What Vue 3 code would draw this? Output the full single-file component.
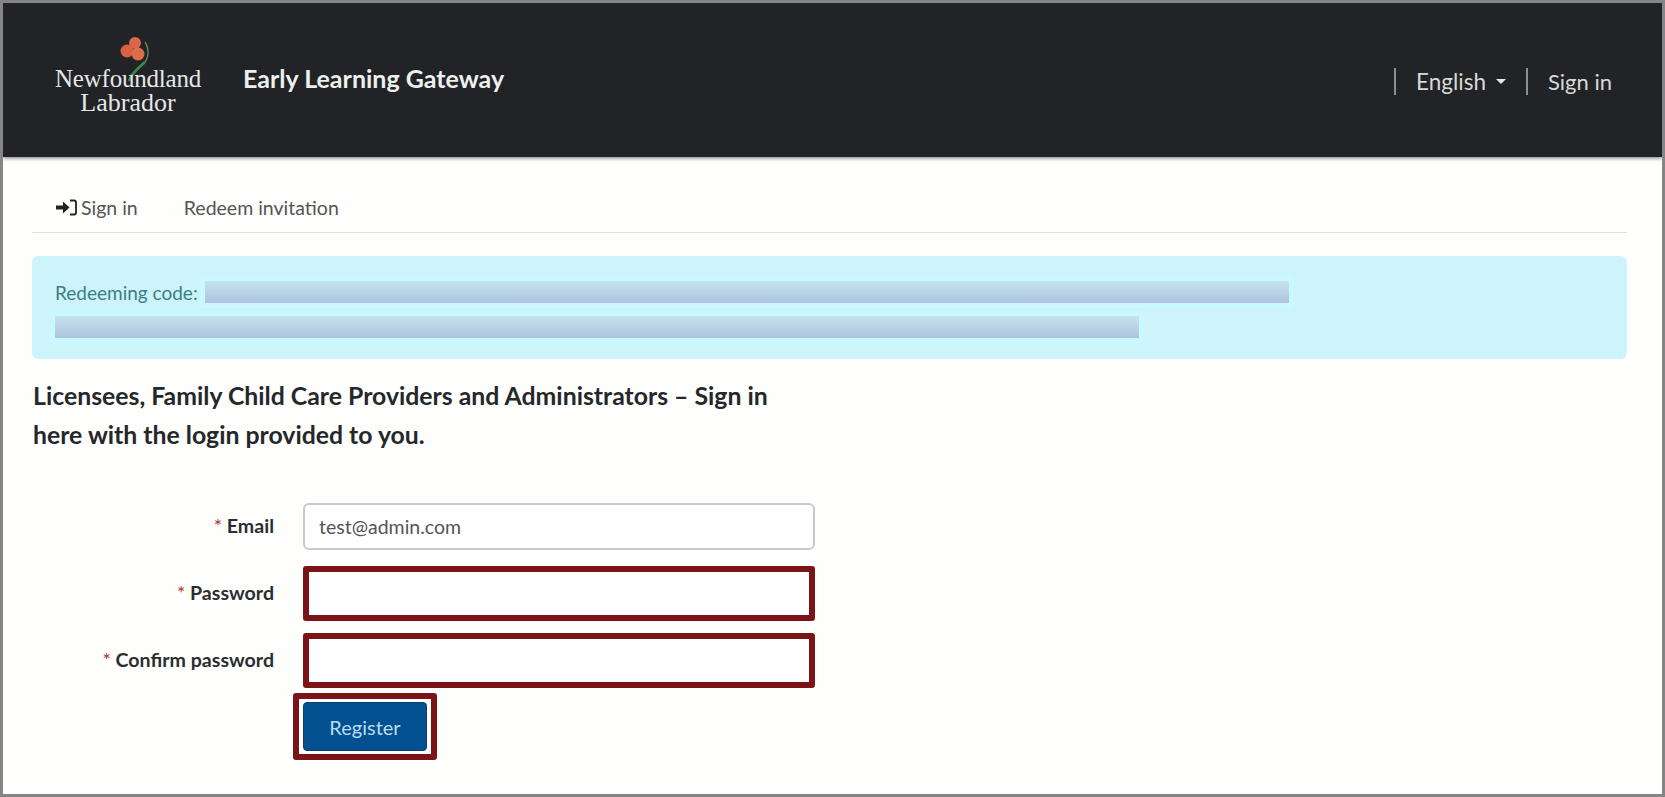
<script setup>
const fields = [
  { label: 'Email', value: 'test@admin.com', marked: false },
  { label: 'Password', value: '', marked: true },
  { label: 'Confirm password', value: '', marked: true }
]
</script>

<template>
  <div class="page">
    <header class="topbar">
      <div class="brand">
        <div class="logo">
          <svg class="flower" width="48" height="56" viewBox="0 0 48 56">
            <path d="M17 47 C20 38 27 34 33 28" fill="none" stroke="#3f8a4a" stroke-width="2.6" />
            <path d="M33 28 C38 21 36 12 33 8" fill="none" stroke="#5d8a55" stroke-width="1.4" />
            <circle cx="23" cy="9" r="6" fill="#d9694a" />
            <circle cx="15" cy="17" r="6.5" fill="#d8613f" />
            <circle cx="26" cy="20" r="6.5" fill="#dd6c48" />
          </svg>
          <span class="logo-a">Newfoundland</span>
          <span class="logo-b">Labrador</span>
        </div>
        <span class="title">Early Learning Gateway</span>
      </div>
      <nav class="topnav">
        <span class="sep"></span>
        <span class="lang">English<i class="caret"></i></span>
        <span class="sep second"></span>
        <span class="signin">Sign in</span>
      </nav>
    </header>

    <main class="content">
      <div class="tabs">
        <span class="tab first">
          <svg width="21" height="17" viewBox="0 0 21 17">
            <path d="M0 6.5h7V2.5l6.5 6-6.5 6v-4H0z" fill="#222" />
            <path d="M14 1.5h4a2 2 0 0 1 2 2v10a2 2 0 0 1-2 2h-4" fill="none" stroke="#222" stroke-width="1.8" />
          </svg>
          Sign in
        </span>
        <span class="tab">Redeem invitation</span>
      </div>

      <div class="alert">
        <div class="alert-line">
          <span class="alert-label">Redeeming code:</span>
          <span class="redact r1"></span>
        </div>
        <div class="alert-line second-line">
          <span class="redact r2"></span>
        </div>
      </div>

      <h2 class="intro">Licensees, Family Child Care Providers and Administrators – Sign in here with the login provided to you.</h2>

      <form class="form" @submit.prevent>
        <template v-for="f in fields" :key="f.label">
          <label class="label" :class="{ spaced: !f.marked }"><span class="star">*</span> {{ f.label }}</label>
          <input class="input" :class="{ marked: f.marked, spaced: !f.marked }" :value="f.value" type="text" />
        </template>
        <span></span>
        <div class="btn-mark">
          <button class="btn" type="submit">Register</button>
        </div>
      </form>
    </main>
  </div>
</template>

<style>
html, body { margin: 0; background: #fff; }
</style>

<style scoped>
.page {
  box-sizing: border-box;
  width: 1665px;
  height: 797px;
  border: 3px solid #858585;
  overflow: hidden;
  background: #fefefd;
  font-family: Lato, "Open Sans", sans-serif;
  color: #212529;
}
.topbar {
  height: 154px;
  background: #212327;
  box-shadow: 0 1px 4px rgba(0, 0, 0, 0.55);
  display: flex;
  align-items: center;
  justify-content: space-between;
  position: relative;
}
.brand { display: flex; align-items: center; margin-top: -2px; }
.logo {
  position: relative;
  width: 150px;
  margin-left: 50px;
  padding-top: 24px;
  display: flex;
  flex-direction: column;
  align-items: center;
  color: #e6e6e6;
  font-family: "Liberation Serif", serif;
  font-size: 25px;
  line-height: 24px;
}
.flower { position: absolute; left: 59px; top: -9px; }
.logo-a, .logo-b { position: relative; white-space: nowrap; }
.logo-a { letter-spacing: -0.2px; }
.logo-b { font-size: 26px; }
.title {
  margin-left: 40px;
  margin-top: -3px;
  color: #eef0ee;
  font-size: 25px;
  font-weight: 700;
}
.topnav {
  display: flex;
  align-items: center;
  padding: 2px 50px 0 0;
  color: #d8dad6;
  font-size: 22.5px;
}
.sep { width: 2px; height: 27px; background: #8d8e90; }
.lang { margin-left: 20px; display: flex; align-items: center; }
.caret {
  margin-left: 10px;
  border-left: 5px solid transparent;
  border-right: 5px solid transparent;
  border-top: 5px solid #e8e8e8;
}
.second { margin-left: 20px; }
.signin { margin-left: 20px; font-size: 22px; }

.content { padding: 0 35px 0 29px; }
.tabs {
  height: 76px;
  border-bottom: 1px solid #dfe1e0;
  display: flex;
  align-items: center;
  padding-top: 26px;
  box-sizing: border-box;
  font-size: 19.5px;
  color: #555;
}
.tab { display: flex; align-items: center; gap: 4px; margin-left: 46px; }
.tab.first { margin-left: 24px; }
.alert {
  margin-top: 23px;
  height: 103px;
  box-sizing: border-box;
  padding-top: 25px;
  padding-left: 23px;
  background: #cdf4fb;
  border-radius: 6px;
  color: #3c7f82;
  font-size: 19px;
}
.alert-line { display: flex; align-items: center; height: 22px; }
.second-line { margin-top: 13px; }
.alert-label { width: 150px; white-space: nowrap; }
.redact {
  display: block;
  height: 22px;
  background: linear-gradient(#c4e4ee, #aec2e0);
  box-shadow: 0 0 0 5px #c9f9ff;
}
.r1 { width: 1084px; }
.r2 { width: 1084px; }
.intro {
  width: 750px;
  margin: 18px 0 0 1px;
  font-size: 24.8px;
  line-height: 38.5px;
  font-weight: 700;
  color: #25282b;
}
.form {
  margin-top: 49px;
  display: grid;
  grid-template-columns: 242px 512px;
  column-gap: 29px;
  row-gap: 12px;
  align-items: center;
}
.spaced { margin-bottom: 4px; }
.label {
  text-align: right;
  font-size: 19.6px;
  font-weight: 700;
  color: #2b2e30;
  margin-top: -2px;
}
.star { color: #a33; font-weight: 400; }
.input {
  box-sizing: border-box;
  width: 512px;
  height: 47px;
  padding: 0 14px;
  border: 2px solid #c9c9c9;
  border-radius: 6px;
  background: #fff;
  font-family: Lato, sans-serif;
  font-size: 19.5px;
  color: #555;
  outline: none;
}
.input.marked {
  height: 55px;
  border: 6px solid #7a1416;
  border-radius: 3px;
}
.btn-mark {
  box-sizing: border-box;
  width: 144px;
  height: 67px;
  margin-left: -10px;
  margin-top: -7px;
  border: 6px solid #7a1416;
  border-radius: 3px;
  padding: 3px 4px;
  background: #fff;
}
.btn {
  display: block;
  width: 100%;
  height: 100%;
  border: 1px solid #0a3d6b;
  border-radius: 4px;
  background: #02508f;
  color: #b9dcf2;
  font-family: Lato, sans-serif;
  font-size: 20px;
}
</style>
